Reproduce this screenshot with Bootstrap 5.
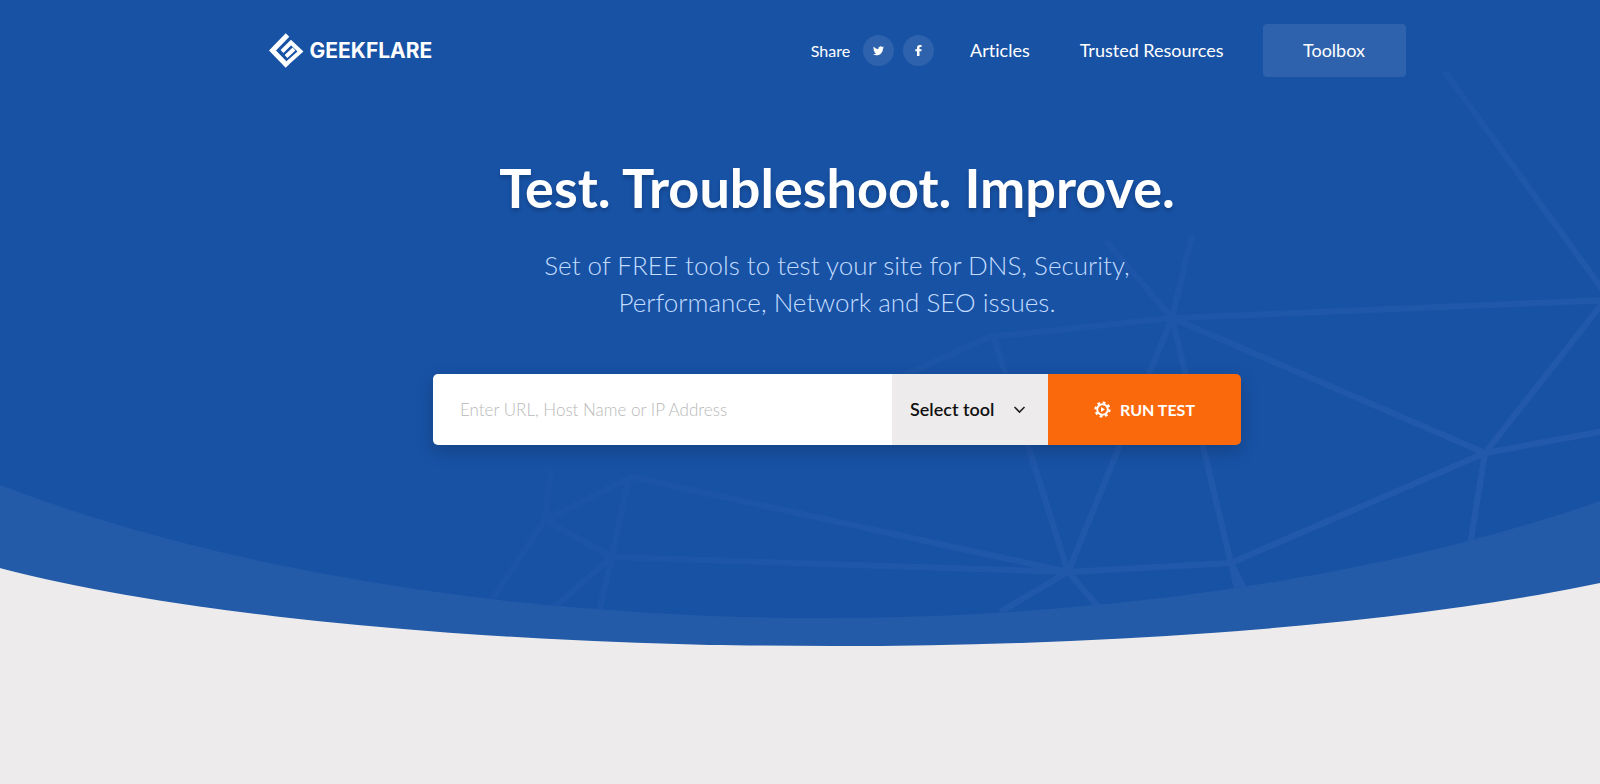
<!DOCTYPE html>
<html lang="en">
<head>
<meta charset="utf-8">
<meta name="viewport" content="width=device-width, initial-scale=1">
<title>Geekflare Tools</title>
<link href="https://cdn.jsdelivr.net/npm/bootstrap@5.3.0/dist/css/bootstrap.min.css" rel="stylesheet">
<style>
  body { background: #edebec; font-family: Lato, "Open Sans", sans-serif; font-size: 18px; line-height: 27px; font-variant-ligatures: none; color: #fff; min-height: 100vh; }
  .hero { position: relative; min-height: 646px; }
  .hero-art { position: absolute; inset: 0; width: 100%; height: 646px; z-index: -1; }
  .hero-inner { padding-left: 74px; }
  .site-bar { max-width: 1137px; padding-top: 24px; }
  .brand-link { color: #fff; text-decoration: none; font: 700 21px/24px Inter, sans-serif; gap: 6px; }
  .brand-link:hover, .site-link:hover { color: #c3dcff; }
  .site-link { color: #fff; text-decoration: none; }
  .share-group { gap: 9px; margin-right: 36px; }
  .menu-group { gap: 50px; margin-right: 39px; }
  .share-label { font-size: 16px; margin-right: 4px; }
  .round-link { width: 31px; height: 31px; background: #2e62ac; }
  .btn-toolbox { --bs-btn-color: #fff; --bs-btn-bg: #2e62ac; --bs-btn-hover-color: #fff; --bs-btn-hover-bg: #3b6db4; --bs-btn-border-width: 0; width: 143px; height: 53px; border-radius: 4px; font-size: 18px; }
  .headline { font-size: 54px; line-height: 64px; font-weight: 700; margin-top: 79px; text-shadow: 0 3px 4px rgba(0,0,0,.2); }
  .tagline { font-size: 26px; line-height: 37px; font-weight: 300; color: #c3dcff; margin-top: 27px; }
  .test-form { max-width: 808px; height: 71px; margin-top: 53px; border-radius: 5px; box-shadow: 0 6px 18px rgba(0,0,0,.2); }
  .test-form .form-control { border: 0; border-radius: 0; padding: 0 27px; font-size: 17px; font-weight: 300; background: #fff; }
  .test-form .form-control::placeholder { color: #b9b9b9; opacity: 1; }
  .test-form .form-select { width: 156px; border: 0; border-radius: 0; padding: 0 18px; font-size: 18px; font-weight: 600; color: #111; background-color: #edebeb; background-position: right 22px center; background-size: 13px 13px;
    background-image: url("data:image/svg+xml,%3Csvg xmlns='http://www.w3.org/2000/svg' viewBox='0 0 13 13' fill='none' stroke='%23222' stroke-width='1.6'%3E%3Cpath d='M1.5 4l5 5 5-5'/%3E%3C/svg%3E"); }
  .btn-run { --bs-btn-color: #fff; --bs-btn-bg: #fa6a0c; --bs-btn-hover-color: #fff; --bs-btn-hover-bg: #e65d05; --bs-btn-border-width: 0; width: 193px; border-radius: 0; font-size: 16px; font-weight: 700; gap: 9px; }
</style>
</head>
<body>
<div class="hero">
  <svg class="hero-art" viewBox="0 0 1600 646" preserveAspectRatio="none" aria-hidden="true">
    <defs>
      <clipPath id="bowl"><path d="M0 0H1600V128H0z"/><ellipse cx="822" cy="128" rx="1200" ry="490"/></clipPath>
      <linearGradient id="fade" gradientUnits="userSpaceOnUse" x1="900" y1="60" x2="1230" y2="600">
        <stop offset="0" stop-color="#2c60b0" stop-opacity="0"/><stop offset="1" stop-color="#2c60b0" stop-opacity=".5"/>
      </linearGradient>
    </defs>
    <path fill="#235ba8" d="M0 0H1600V471H0z"/><ellipse cx="832" cy="471" rx="1000" ry="175" fill="#235ba8"/>
    <g clip-path="url(#bowl)">
      <path fill="#1852a5" d="M0 0H1600V646H0z"/>
      <path fill="none" stroke="url(#fade)" stroke-width="6" d="M1445 72L1610 300L1172 318L989 337L905 375M1172 318L1192 235M1172 318L1105 240M1172 318L1485 453L1605 300M1485 453L1610 430M1485 453L1466 570M1485 453L1231 563L1068 572L1172 318L1231 563L1242 610M1231 563L1255 610M1068 572L994 338M1068 572L1000 612M1068 572L1110 620M1068 572L632 477L545 520L612 557L1068 572M551 470L545 520L485 610M628 480L612 557L597 620M612 557L545 615"/>
    </g>
  </svg>
  <div class="hero-inner">
    <header class="site-bar d-flex align-items-center mx-auto">
      <a class="brand-link d-flex align-items-center me-auto" href="#">
        <svg width="35" height="35" viewBox="0 0 35 35" fill="none" stroke="#fff" stroke-width="5" aria-hidden="true"><path d="M18.500 2L3.500 17.500L18.500 33"/><path stroke-width="4" d="M13 18.500L22 9.500L31.500 18.500L18.500 30M17 23.500L25 16"/></svg>
        GEEKFLARE
      </a>
      <nav class="d-flex align-items-center">
        <div class="share-group d-flex align-items-center">
          <span class="share-label">Share</span>
          <a class="round-link rounded-circle d-flex align-items-center justify-content-center" href="#" aria-label="Twitter"><svg width="11" height="11" viewBox="0 0 16 16" fill="#fff"><path d="M5.026 15c6.038 0 9.341-5.003 9.341-9.334q.002-.211-.006-.422A6.700 6.700 0 0 0 16 3.542a6.700 6.700 0 0 1-1.889.518 3.300 3.300 0 0 0 1.447-1.817 6.500 6.500 0 0 1-2.087.793A3.286 3.286 0 0 0 7.875 6.030a9.320 9.320 0 0 1-6.767-3.429 3.290 3.290 0 0 0 1.018 4.382A3.300 3.300 0 0 1 .640 6.575v.045a3.290 3.290 0 0 0 2.632 3.218 3.200 3.200 0 0 1-.865.115 3 3 0 0 1-.614-.057 3.280 3.280 0 0 0 3.067 2.277A6.600 6.600 0 0 1 .780 13.580a6 6 0 0 1-.780-.045A9.340 9.340 0 0 0 5.026 15"/></svg></a>
          <a class="round-link rounded-circle d-flex align-items-center justify-content-center" href="#" aria-label="Facebook"><svg width="7" height="11" viewBox="0 0 7 11" fill="#fff"><path d="M2 11V6.300H.300V4.200H2V2.900C2 1 3 0 4.800 0H6.600V2H5.400C4.700 2 4.500 2.300 4.500 3V4.200H6.600L6.300 6.300H4.500V11z"/></svg></a>
        </div>
        <div class="menu-group d-flex">
          <a class="site-link" href="#">Articles</a>
          <a class="site-link" href="#">Trusted Resources</a>
        </div>
        <button class="btn btn-toolbox" type="button">Toolbox</button>
      </nav>
    </header>
    <main class="text-center">
      <h1 class="headline mb-0">Test. Troubleshoot. Improve.</h1>
      <p class="tagline mb-0">Set of FREE tools to test your site for DNS, Security,<br>Performance, Network and SEO issues.</p>
      <form class="test-form d-flex mx-auto overflow-hidden">
        <input class="form-control flex-fill" type="text" placeholder="Enter URL, Host Name or IP Address" aria-label="Address">
        <select class="form-select flex-shrink-0" aria-label="Tool"><option>Select tool</option></select>
        <button class="btn btn-run flex-shrink-0 d-flex align-items-center justify-content-center" type="button">
          <svg width="17" height="17" viewBox="0 0 17 17" fill="none" stroke="#fff" aria-hidden="true"><circle cx="8.500" cy="8.500" r="5.300" stroke-width="1.900"/><circle cx="8.500" cy="8.500" r="7" stroke-width="2.200" stroke-dasharray="2.750 2.750"/><path d="M7 6l4 2.500L7 11z" fill="#fff" stroke="none"/></svg>
          RUN TEST
        </button>
      </form>
    </main>
  </div>
</div>
<script src="https://cdn.jsdelivr.net/npm/bootstrap@5.3.0/dist/js/bootstrap.bundle.min.js"></script>
</body>
</html>
